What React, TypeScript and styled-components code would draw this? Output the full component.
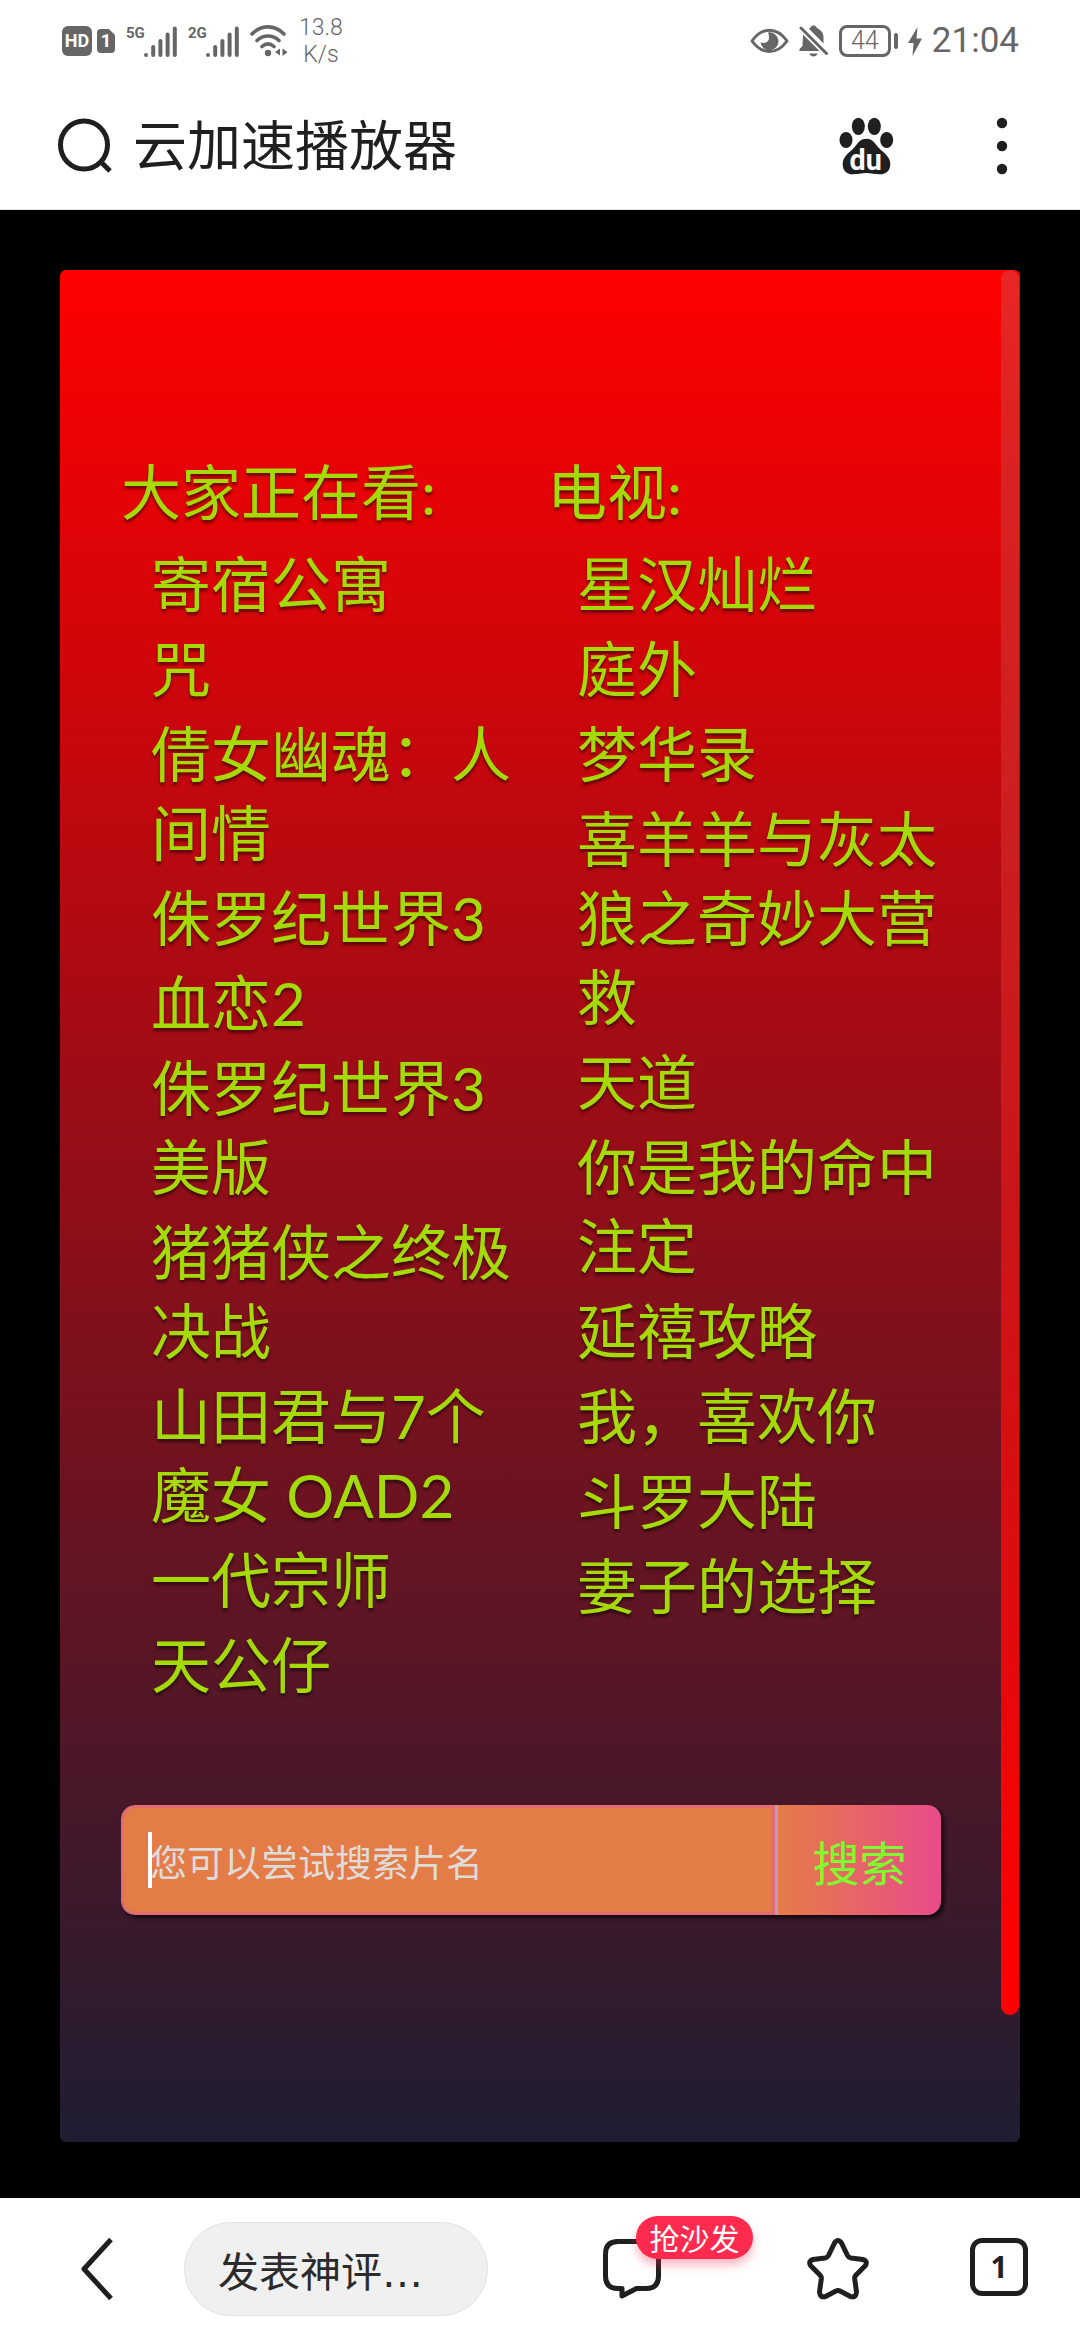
import React from 'react';
import styled, { createGlobalStyle } from 'styled-components';

const INK = '#1f1f1f';
const STATUS = '#666666';
const SANS = `Lato, "Noto Sans CJK SC", sans-serif`;

const GlobalStyle = createGlobalStyle`
  *, *::before, *::after { box-sizing: border-box; }
  body { margin: 0; background: #000; font-family: ${SANS}; color: ${INK}; }
  h1, h2, ul { margin: 0; padding: 0; font-weight: 400; }
  button, input { font: inherit; color: inherit; border: 0; padding: 0; margin: 0; background: none; }
  svg { display: block; flex: none; }
`;

const Screen = styled.div`
  display: flex;
  flex-direction: column;
  min-height: 100vh;
`;

/* status bar */
const StatusBar = styled.div`
  display: flex;
  justify-content: space-between;
  align-items: center;
  height: 82px;
  padding: 0 61px 0 62px;
  background: #fff;
  color: ${STATUS};
`;
const StatusGroup = styled.div<{ $gap: number }>`
  display: flex;
  align-items: center;
  gap: ${(p) => p.$gap}px;
`;
const Badges = styled.div`
  display: flex;
  align-items: center;
  gap: 5px;
`;
const HdBadge = styled.span`
  width: 30px;
  height: 30px;
  border-radius: 6px;
  background: ${STATUS};
  color: #fff;
  font: 700 18px/30px Roboto, sans-serif;
  text-align: center;
`;
const SimBadge = styled.span`
  width: 18px;
  height: 24px;
  border-radius: 4px;
  background: ${STATUS};
  color: #fff;
  font: 700 19px/24px Roboto, sans-serif;
  text-align: center;
  clip-path: polygon(0 0, 66% 0, 100% 25%, 100% 100%, 0 100%);
`;
const Signal = styled.div`
  display: flex;
  height: 31px;
`;
const Network = styled.span`
  font: 700 15px/15px Roboto, sans-serif;
  width: 18px;
`;
const Speed = styled.div`
  font: 300 23px/27px Roboto, sans-serif;
  text-align: center;
`;
const Battery = styled.div`
  display: flex;
  align-items: center;
  gap: 3px;
  &::after {
    content: '';
    width: 4px;
    height: 16px;
    border-radius: 2px;
    background: ${STATUS};
  }
`;
const Charge = styled.span`
  width: 52px;
  height: 32px;
  border: 3px solid ${STATUS};
  border-radius: 8px;
  font: 300 25px/26px Roboto, sans-serif;
  text-align: center;
`;
const Clock = styled.time`
  font: 400 35px/36px Roboto, sans-serif;
`;

/* address bar */
const AddressBar = styled.header`
  display: flex;
  align-items: center;
  height: 128px;
  padding: 0 58px;
  background: #fff;
  border-bottom: 1px solid #e4e4e4;
`;
const PageTitle = styled.h1`
  flex: 1;
  margin-left: 20px;
  font-size: 54px;
  line-height: 80px;
`;
const Actions = styled.div`
  display: flex;
  align-items: center;
  gap: 88px;
`;
const IconButton = styled.button<{ $width: number }>`
  display: flex;
  justify-content: center;
  flex: none;
  width: ${(p) => p.$width}px;
`;

/* page */
const Page = styled.main`
  display: flex;
  flex: 1;
  padding: 60px 60px 56px;
  background: #000;
`;
const Panel = styled.section`
  position: relative;
  flex: 1;
  padding: 183px 79px 120px 61px;
  border-radius: 6px;
  background: linear-gradient(#ff0000, #1f1d32);
  overflow: hidden;
`;
const ScrollThumb = styled.div`
  position: absolute;
  top: 0;
  right: 1px;
  width: 18px;
  height: 1745px;
  border-radius: 9px;
  background: linear-gradient(#e92626, #dc2222 10%, #cb1e20 33%, #cb1518 55%, #dd0c0e 75%, #f40405 90%, #ff0000);
`;
const Columns = styled.div`
  display: grid;
  grid-template-columns: 1fr 1fr;
  column-gap: 32px;
  color: #a4da08;
  font-size: 60px;
  line-height: 79px;
  text-shadow: 0 3px 3px rgba(0, 0, 0, 0.5);
`;
const ColumnTitle = styled.h2`
  font-size: 60px;
  white-space: nowrap;
`;
const TitleList = styled.ul`
  display: flex;
  flex-direction: column;
  gap: 6px;
  margin-top: 13px;
  padding-left: 30px;
  list-style: none;
`;
const SearchForm = styled.form`
  position: relative;
  display: flex;
  height: 110px;
  margin-top: 100px;
  border-radius: 14px;
  box-shadow: 3px 3px 4px rgba(0, 0, 0, 0.7);
  overflow: hidden;
`;
const SearchInput = styled.input`
  flex: 1;
  min-width: 0;
  padding: 4px 26px 0;
  border: 3px solid #df6b73;
  border-radius: 14px 0 0 14px;
  outline: 0;
  background: #e47c48;
  font-size: 37px;
  &::placeholder { color: #dfdbd8; opacity: 1; }
`;
const Caret = styled.span`
  position: absolute;
  left: 27px;
  top: 27px;
  width: 4px;
  height: 56px;
  background: #fff;
`;
const SearchButton = styled.button`
  width: 166px;
  border-left: 3px solid #c09cba;
  background: linear-gradient(90deg, #e47c48, #e94b8a);
  color: #7dfd2c;
  font-size: 47px;
`;

/* bottom toolbar */
const Toolbar = styled.nav`
  display: flex;
  align-items: center;
  height: 142px;
  padding: 0 52px 0 81px;
  background: #fff;
`;
const CommentBox = styled.button`
  width: 304px;
  height: 94px;
  margin-left: 72px;
  padding-left: 33px;
  border: 1px solid #e2e2e2;
  border-radius: 47px;
  background: #f0f0f0;
  color: #2b2b2b;
  font-family: "DejaVu Sans", "Noto Sans CJK SC", sans-serif;
  font-size: 41px;
  text-align: left;
`;
const Tools = styled.div`
  display: flex;
  gap: 101px;
  margin-left: auto;
`;
const CommentButton = styled.button`
  position: relative;
  width: 103px;
`;
const SofaBadge = styled.span`
  position: absolute;
  left: 33px;
  top: -22px;
  width: 117px;
  height: 43px;
  border-radius: 22px;
  background: #ff2a4d;
  box-shadow: 0 6px 10px rgba(255, 42, 77, 0.35);
  color: #fff;
  font-size: 30px;
  line-height: 45px;
`;
const TabCount = styled.button`
  width: 58px;
  height: 58px;
  border: 5px solid ${INK};
  border-radius: 12px;
  font: 700 30px/48px "Noto Sans", sans-serif;
`;

const movies = [
  '寄宿公寓', '咒', '倩女幽魂：人间情', '侏罗纪世界3', '血恋2', '侏罗纪世界3美版',
  '猪猪侠之终极决战', '山田君与7个魔女 OAD2', '一代宗师', '天公仔',
];
const shows = [
  '星汉灿烂', '庭外', '梦华录', '喜羊羊与灰太狼之奇妙大营救', '天道',
  '你是我的命中注定', '延禧攻略', '我，喜欢你', '斗罗大陆', '妻子的选择',
];

const Bars = () => (
  <svg width="33" height="31" viewBox="0 0 33 31" stroke={STATUS} strokeWidth="4" strokeLinecap="round">
    <path d="M2 28.9V29M9.2 21V29M16.4 15V29M23.6 8.500V29M30.800 2.500V29" />
  </svg>
);

const SignalMeter = ({ label }: { label: string }) => (
  <Signal><Network>{label}</Network><Bars /></Signal>
);

const Wifi = () => (
  <svg width="38" height="32" viewBox="0 0 38 32" fill="none" stroke={STATUS} strokeWidth="3.600" strokeLinecap="round">
    <path d="M2 9C11-.5 25-.5 34 9M7 15.500c6.500-6 15.500-6 22 0M12 21.500c4-3.500 8-3.500 12 0" />
    <circle cx="18" cy="28" r="3.200" fill={STATUS} stroke="none" />
    <path d="M30 23.500v7l-5-3.500zM32.500 23.500v7.500l5-3.700z" fill={STATUS} stroke="none" />
  </svg>
);

const Eye = () => (
  <svg width="39" height="26" viewBox="0 0 39 26">
    <path d="M2 13C12-1.500 27-1.500 37 13 27 27 12 27 2 13z" fill="none" stroke={STATUS} strokeWidth="3" strokeLinejoin="round" />
    <path d="M18 4.500A9 9 0 1 1 10.500 14c2 2 8 1 8.500-3.500.2-2.500-.5-4.500-1-6z" fill={STATUS} />
  </svg>
);

const BellOff = () => (
  <svg width="30" height="32" viewBox="0 0 30 32" fill={STATUS}>
    <path d="M4 9.500 20.500 26H.5v-2L3.500 21zM10 3.800C11 3 11.500 2.500 12 1.500c1-1.500 4-1.500 5 0 .5 1 1 1.500 2 2 3.500 2 5.500 5 5.500 8.500v6.500z" />
    <path d="M10.500 28.500h8c-1 4-7 4-8 0z" />
    <path d="M2 3 27.500 28.500" stroke={STATUS} strokeWidth="3" strokeLinecap="round" />
  </svg>
);

const Bolt = () => (
  <svg width="14" height="29" viewBox="0 0 14 29" fill={STATUS}>
    <path d="M9.500 0 0 16h5.500L4.500 29 14 11.500H8.500z" />
  </svg>
);

const SearchGlass = () => (
  <svg width="55" height="56" viewBox="0 0 55 56" fill="none" stroke={INK} strokeWidth="5">
    <ellipse cx="26" cy="27" rx="23.500" ry="24" />
    <path d="M42.500 43.500 52 53" />
  </svg>
);

const BaiduPaw = () => (
  <svg width="55" height="66" viewBox="178 66 165 198" fill={INK}>
    <ellipse cx="199" cy="147" rx="19.500" ry="24" />
    <ellipse cx="236" cy="106" rx="19.500" ry="26" />
    <ellipse cx="284" cy="106" rx="19.500" ry="26" />
    <ellipse cx="321" cy="147" rx="19.500" ry="24" />
    <path d="M260 143c16 0 24 10 33 23 11 15 39 28 39 53 0 20-13 31-32 31-14 0-25-4-40-4s-26 4-40 4c-19 0-31-11-31-31 0-25 27-38 38-53 9-13 17-23 33-23z" />
    <text x="258" y="236" fill="#fff" fontFamily="Roboto, sans-serif" fontWeight="700" fontSize="86" textAnchor="middle">du</text>
  </svg>
);

const Dots = () => (
  <svg width="12" height="58" viewBox="0 0 12 58" fill={INK}>
    <circle cx="6" cy="6" r="5.200" />
    <circle cx="6" cy="29" r="5.200" />
    <circle cx="6" cy="52" r="5.200" />
  </svg>
);

const Back = () => (
  <svg width="32" height="64" viewBox="0 0 32 64" fill="none" stroke={INK} strokeWidth="5" strokeLinejoin="round">
    <path d="M30 2.500 3 32l27 29.500" />
  </svg>
);

const Bubble = () => (
  <svg width="58" height="60" viewBox="0 0 58 60" fill="none" stroke={INK} strokeWidth="5" strokeLinejoin="round">
    <path d="M15 2.500h28q12.500 0 12.500 12.500v22q0 12.500-12.500 12.500H33.500L19 57V49.500H15Q2.500 49.500 2.500 37V15Q2.500 2.500 15 2.500z" />
  </svg>
);

const Star = () => (
  <svg width="62" height="62" viewBox="0 0 62 62" fill="none" stroke={INK} strokeWidth="5" strokeLinejoin="round">
    <path d="M27.500 5q3.500-5 7 0l6 12.500q1 2 3.500 2.500l12 1.500q5 1.500 2.500 6L49 37q-1.500 1.500-1.300 4l1.800 13q-.5 6-6 4.500L33 53q-2-1-4 0l-10.500 5.500q-5.500 1.500-6-4.500l1.800-13q.2-2.500-1.300-4L3.500 27.500q-2.500-4.500 2.500-6L18 20q2.500-.5 3.500-2.500z" />
  </svg>
);

const Column = ({ title, items }: { title: string; items: string[] }) => (
  <div>
    <ColumnTitle>{title}</ColumnTitle>
    <TitleList>
      {items.map((item) => <li key={item}>{item}</li>)}
    </TitleList>
  </div>
);

export default function App() {
  return (
    <Screen>
      <GlobalStyle />
      <StatusBar>
        <StatusGroup $gap={11}>
          <Badges><HdBadge>HD</HdBadge><SimBadge>1</SimBadge></Badges>
          <SignalMeter label="5G" />
          <SignalMeter label="2G" />
          <Wifi />
          <Speed>13.8<br />K/s</Speed>
        </StatusGroup>
        <StatusGroup $gap={10}>
          <Eye />
          <BellOff />
          <Battery><Charge>44</Charge></Battery>
          <Bolt />
          <Clock>21:04</Clock>
        </StatusGroup>
      </StatusBar>

      <AddressBar>
        <SearchGlass />
        <PageTitle>云加速播放器</PageTitle>
        <Actions>
          <IconButton $width={55} aria-label="百度"><BaiduPaw /></IconButton>
          <IconButton $width={40} aria-label="菜单"><Dots /></IconButton>
        </Actions>
      </AddressBar>

      <Page>
        <Panel>
          <Columns>
            <Column title="大家正在看:" items={movies} />
            <Column title="电视:" items={shows} />
          </Columns>
          <SearchForm onSubmit={(e) => e.preventDefault()}>
            <SearchInput type="text" aria-label="片名" placeholder="您可以尝试搜索片名" />
            <Caret />
            <SearchButton type="submit">搜索</SearchButton>
          </SearchForm>
          <ScrollThumb />
        </Panel>
      </Page>

      <Toolbar>
        <IconButton $width={31} aria-label="返回"><Back /></IconButton>
        <CommentBox>发表神评…</CommentBox>
        <Tools>
          <CommentButton aria-label="评论"><Bubble /><SofaBadge>抢沙发</SofaBadge></CommentButton>
          <IconButton $width={62} aria-label="收藏"><Star /></IconButton>
          <TabCount>1</TabCount>
        </Tools>
      </Toolbar>
    </Screen>
  );
}
